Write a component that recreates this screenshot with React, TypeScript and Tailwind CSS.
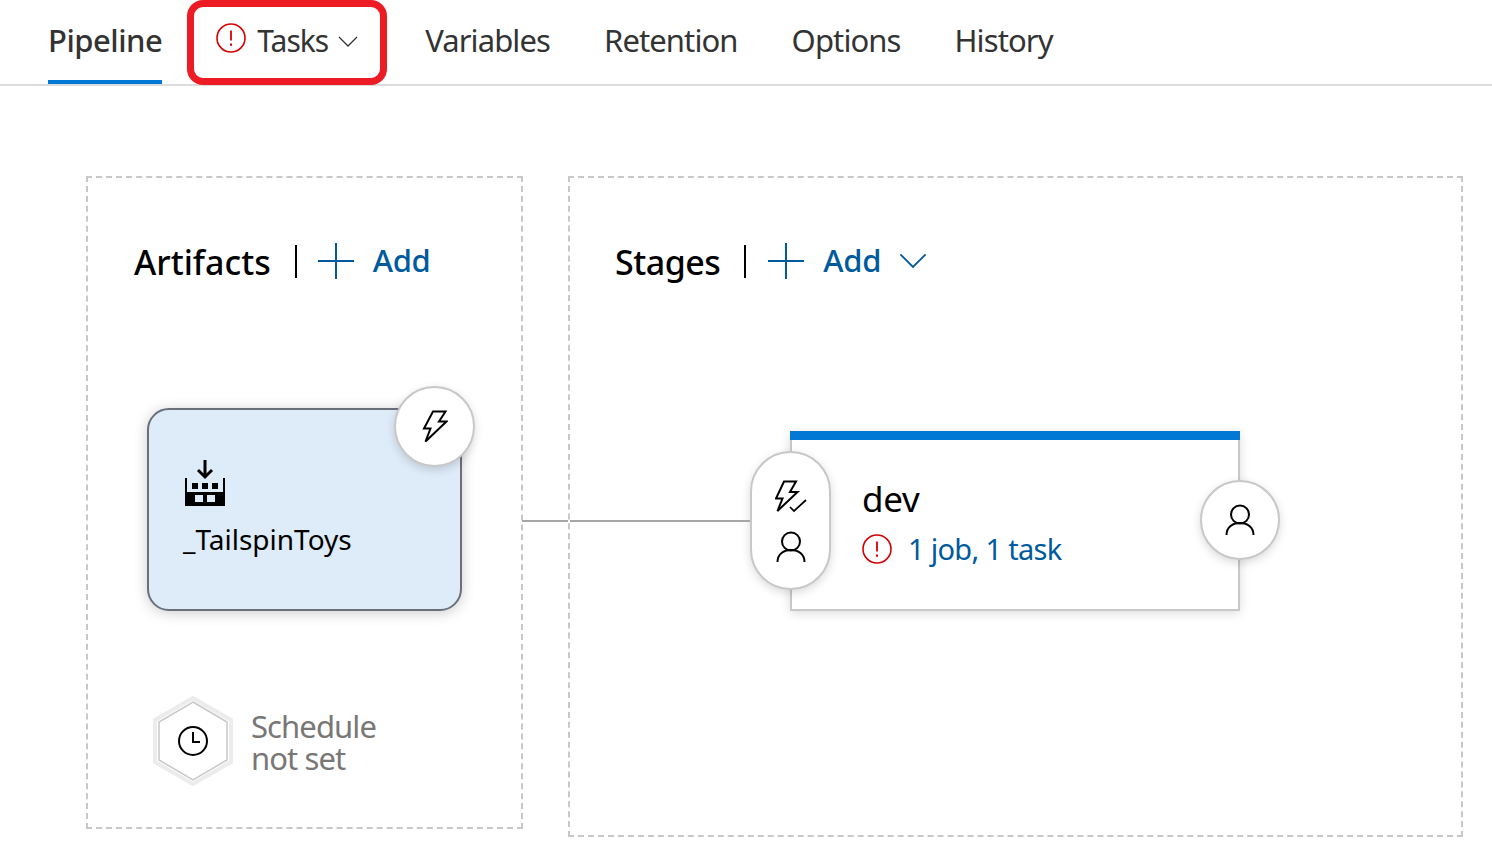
const font = "font-['Noto_Sans','Open_Sans',sans-serif]";

function AlertIcon({ size = 30 }: { size?: number }) {
  return (
    <svg width={size} height={size} viewBox="0 0 30 30" fill="none" className="shrink-0">
      <circle cx="15" cy="15" r="14" stroke="#d60000" strokeWidth="1.6" />
      <path d="M15 7.500v10" stroke="#d60000" strokeWidth="1.8" />
      <path d="M15 20.500v2.200" stroke="#d60000" strokeWidth="2" />
    </svg>
  );
}

function Chevron({ width = 20, color = "#333" }: { width?: number; color?: string }) {
  return (
    <svg width={width} height={width * 0.55} viewBox="0 0 20 11" fill="none" className="shrink-0">
      <path d="M1 1l9 9 9-9" stroke={color} strokeWidth="1.3" />
    </svg>
  );
}

function Plus() {
  return (
    <svg width="36" height="36" viewBox="0 0 36 36" fill="none" className="shrink-0">
      <path d="M18 0v36M0 18h36" stroke="#005a9e" strokeWidth="2" />
    </svg>
  );
}

function Person() {
  return (
    <svg width="30" height="32" viewBox="0 0 30 32" fill="none">
      <circle cx="15" cy="10.500" r="9" stroke="#000" strokeWidth="2" />
      <path d="M1.500 31c0-7.500 5.500-12 13.500-12s13.500 4.500 13.500 12" stroke="#000" strokeWidth="2" />
    </svg>
  );
}

function Bolt() {
  return (
    <svg width="26" height="33" viewBox="0 0 26 33" fill="none">
      <path d="M11 1.500h12.500L17 11.500h7.500L3.500 31.500l5-13H2z" stroke="#000" strokeWidth="2" strokeLinejoin="miter" />
    </svg>
  );
}

function BoltCheck() {
  return (
    <svg width="32" height="33" viewBox="0 0 32 33" fill="none">
      <path d="M9 1.500h12L15 12h7.500L2.500 31l5-12.500H1z" stroke="#000" strokeWidth="2" />
      <path d="M15 27l4 4 12-11" stroke="#000" strokeWidth="1.700" />
    </svg>
  );
}

function ArtifactIcon() {
  return (
    <svg width="40" height="46" viewBox="0 0 40 46" fill="none">
      <path d="M20 0v16M13 10l7 7 7-7" stroke="#000" strokeWidth="3" />
      <path d="M0 18h2v14h36V18h2v28H0z" fill="#000" />
      <rect x="7" y="23" width="6" height="6" fill="#000" />
      <rect x="17" y="23" width="6" height="6" fill="#000" />
      <rect x="27" y="23" width="6" height="6" fill="#000" />
      <rect x="2" y="32" width="36" height="14" fill="#000" />
      <rect x="10" y="35" width="8" height="7" fill="#deebf8" />
      <rect x="22" y="35" width="8" height="7" fill="#deebf8" />
    </svg>
  );
}

function Hexagon() {
  return (
    <svg width="80" height="90" viewBox="0 0 80 90" fill="none">
      <path d="M40 2L78 24v42L40 88 2 66V24z" fill="#fff" stroke="#ececec" strokeWidth="4" />
      <path d="M40 6L74 26v38L40 84 6 64V26z" stroke="#c8c8c8" strokeWidth="1.500" />
      <circle cx="40" cy="45" r="14" stroke="#000" strokeWidth="2" />
      <path d="M40 36v10h7" stroke="#000" strokeWidth="2" />
    </svg>
  );
}

function Header({ title, caret, tight }: { title: string; caret?: boolean; tight?: boolean }) {
  return (
    <div className="flex h-[38px] items-center">
      <span className={`relative top-[1px] text-[34px] leading-[38px] font-medium text-black ${tight ? "tracking-[-0.5px]" : "tracking-normal"}`}>
        {title}
      </span>
      <span className="ml-[24px] h-[33px] w-[2px] bg-black" />
      <span className={tight ? "ml-[22px]" : "ml-[21px]"}><Plus /></span>
      <span className="relative -top-[1px] ml-[19px] text-[31px] leading-[38px] font-medium text-[#005a9e] tracking-[-0.3px]">Add</span>
      {caret && <span className="ml-[18px]"><Chevron width={28} color="#005a9e" /></span>}
    </div>
  );
}

export default function App() {
  const tabs = ["Variables", "Retention", "Options", "History"];
  return (
    <div className={`${font} relative h-[867px] w-[1492px] overflow-hidden bg-white`}>
      <nav className="flex h-[86px] items-start border-b-2 border-[#dcdcdc] pl-[48px]">
        <div className="flex h-[84px] items-center border-b-4 border-[#0078d4] text-[31px] leading-none font-medium text-[#333] tracking-[-0.5px]">
          Pipeline
        </div>
        <div className="relative ml-[54px] flex h-[84px] items-center text-[30px] leading-none text-[#333] tracking-[-1px]">
          <span className="absolute top-0 -left-[29px] h-[85px] w-[200px] rounded-[16px] border-[7px] border-[#ed1c24]" />
          <span className="-mt-[8px]"><AlertIcon /></span>
          <span className="ml-[11px] -mt-[2px]">Tasks</span>
          <span className="ml-[10px] -mt-[2px]"><Chevron /></span>
        </div>
        <div className="ml-[67px] flex h-[80px] items-center gap-[54px] text-[31px] leading-none text-[#333] tracking-[-0.9px]">
          {tabs.map((tab) => (
            <span key={tab}>{tab}</span>
          ))}
        </div>
      </nav>

      <main className="flex items-start gap-[45px] pt-[90px] pl-[86px]">
        <section className="relative h-[653px] w-[437px] border-2 border-dashed border-[#c8c8c8] pt-[64px] pl-[46px]">
          <Header title="Artifacts" />
          <div className="relative mt-[128px] ml-[13px] h-[203px] w-[315px] rounded-[22px] border-2 border-[#69707a] bg-[#deebf8] pt-[50px] pl-[36px] shadow-[0_2px_14px_rgba(0,0,0,0.2)]">
            <ArtifactIcon />
            <div className="mt-[14px] -ml-[2px] text-[28px] leading-[38px] text-black tracking-normal">_TailspinToys</div>
            <div className="absolute -top-[24px] -right-[15px] flex h-[81px] w-[81px] items-center justify-center rounded-full border-2 border-[#c8c8c8] bg-white shadow-[0_3px_10px_rgba(0,0,0,0.15)]">
              <Bolt />
            </div>
          </div>
          <div className="mt-[85px] ml-[19px] flex items-center gap-[18px]">
            <Hexagon />
            <div className="pt-[2px] text-[31px] leading-[32px] text-[#797775] tracking-[-0.9px]">
              Schedule
              <br />
              not set
            </div>
          </div>
          <span className="absolute top-[342px] -right-[47px] h-[2px] w-[46px] bg-[#a6a6a6]" />
        </section>

        <section className="relative h-[661px] w-[895px] border-2 border-dashed border-[#c8c8c8] pt-[64px] pl-[45px]">
          <Header title="Stages" caret tight />
          <div className="relative mt-[151px] ml-[175px] flex h-[180px] w-[450px] flex-col border-x-2 border-b-2 border-[#c8c8c8] bg-white shadow-[0_2px_10px_rgba(0,0,0,0.14)]">
            <div className="-mx-[2px] h-[9px] bg-[#0078d4]" />
            <div className="pt-[37px] pl-[70px]">
              <div className="text-[35px] leading-[44px] tracking-[-0.3px] text-black">dev</div>
              <div className="mt-[9px] flex items-center gap-[16px]">
                <AlertIcon />
                <span className="text-[29px] leading-[38px] text-[#005a9e] tracking-[-0.7px]">1 job, 1 task</span>
              </div>
            </div>
            <div className="absolute top-[20px] -left-[42px] flex h-[139px] w-[81px] flex-col items-center gap-[18px] rounded-full border-2 border-[#c8c8c8] bg-white pt-[27px] shadow-[0_3px_10px_rgba(0,0,0,0.15)]">
              <BoltCheck />
              <Person />
            </div>
            <div className="absolute top-[49px] -right-[42px] flex h-[80px] w-[80px] items-center justify-center rounded-full border-2 border-[#c8c8c8] bg-white shadow-[0_3px_10px_rgba(0,0,0,0.15)]">
              <Person />
            </div>
          </div>
          <span className="absolute top-[342px] left-0 h-[2px] w-[180px] bg-[#a6a6a6]" />
        </section>
      </main>
    </div>
  );
}
